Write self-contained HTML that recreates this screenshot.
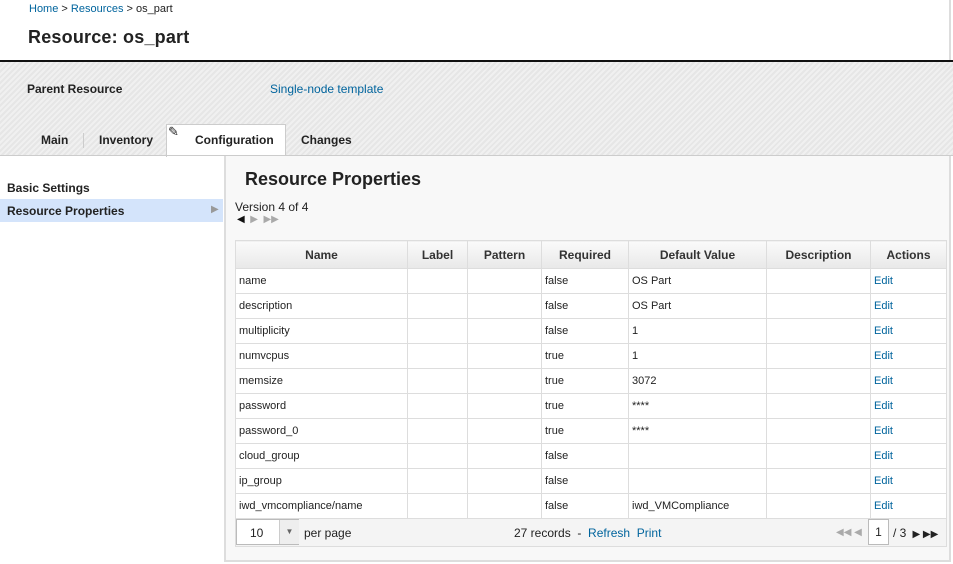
<!DOCTYPE html><html><head><style>
body{margin:0;width:953px;height:564px;overflow:hidden;font-family:"Liberation Sans",sans-serif;font-size:12px;color:#222;background:#fff;position:relative}
a{color:#00649d;text-decoration:none}
.abs{position:absolute}
.band{left:0;top:60px;width:953px;height:96px;border-top:2px solid #111;box-sizing:border-box;background:repeating-linear-gradient(135deg,#f0f0f0 0 2px,#e6e6e6 2px 4px)}
.tab{top:124px;height:32px;line-height:33px;font-weight:bold;font-size:12px}
table{border-collapse:collapse;position:absolute;left:235px;top:240px;width:712px;background:#fff;font-size:11px;table-layout:fixed}
td,th{border:1px solid #ddd;padding:0 3px;height:24px;text-align:left;overflow:hidden;white-space:nowrap}
th{height:27px;text-align:center;font-size:12px;color:#333;background:linear-gradient(#fafafa,#e8e8e8)}
</style></head><body>
<div class="abs" style="left:29px;top:3px;font-size:11px"><a>Home</a> &gt; <a>Resources</a> &gt; os_part</div>
<div class="abs" style="left:28px;top:27px;font-size:18px;font-weight:bold;letter-spacing:0.2px">Resource: os_part</div>
<div class="abs" style="left:949px;top:0;width:2px;height:60px;background:#ddd"></div>
<div class="abs band"></div>
<div class="abs" style="left:27px;top:82px;font-weight:bold">Parent Resource</div>
<div class="abs" style="left:270px;top:82px"><a>Single-node template</a></div>
<div class="abs tab" style="left:41px">Main</div>
<div class="abs" style="left:83px;top:133px;width:1px;height:15px;background:#ccc"></div>
<div class="abs tab" style="left:99px">Inventory</div>
<div class="abs tab" style="left:166px;width:120px;height:33px;background:#fff;border:1px solid #ccc;border-bottom:none;box-sizing:border-box;padding-left:28px;line-height:31px">Configuration</div>
<div class="abs" style="left:168px;top:124px;font-size:13px">✎</div>
<div class="abs tab" style="left:301px">Changes</div>
<div class="abs" style="left:0;top:155px;width:953px;height:1px;background:#ccc"></div>
<div class="abs" style="left:7px;top:181px;font-weight:bold">Basic Settings</div>
<div class="abs" style="left:0;top:199px;width:223px;height:23px;background:#d4e4fb"></div>
<div class="abs" style="left:7px;top:204px;font-weight:bold">Resource Properties</div>
<div class="abs" style="left:211px;top:204px;color:#999;font-size:10px">▶</div>
<div class="abs" style="left:224px;top:156px;width:727px;height:406px;background:#f8f8f8;border:2px solid #ddd;border-top:none;box-sizing:border-box"></div>
<div class="abs" style="left:245px;top:169px;font-size:18px;font-weight:bold">Resource Properties</div>
<div class="abs" style="left:235px;top:200px">Version 4 of 4</div>
<div class="abs" style="left:237px;top:214px;font-size:10px;color:#111">◀ <span style="color:#aaa">&nbsp;▶ &nbsp;▶▶</span></div>
<table>
<colgroup><col style="width:172px"><col style="width:60px"><col style="width:74px"><col style="width:87px"><col style="width:138px"><col style="width:104px"><col></colgroup>
<tr><th>Name</th><th>Label</th><th>Pattern</th><th>Required</th><th>Default Value</th><th>Description</th><th>Actions</th></tr>
<tr><td>name</td><td></td><td></td><td>false</td><td>OS Part</td><td></td><td><a>Edit</a></td></tr>
<tr><td>description</td><td></td><td></td><td>false</td><td>OS Part</td><td></td><td><a>Edit</a></td></tr>
<tr><td>multiplicity</td><td></td><td></td><td>false</td><td>1</td><td></td><td><a>Edit</a></td></tr>
<tr><td>numvcpus</td><td></td><td></td><td>true</td><td>1</td><td></td><td><a>Edit</a></td></tr>
<tr><td>memsize</td><td></td><td></td><td>true</td><td>3072</td><td></td><td><a>Edit</a></td></tr>
<tr><td>password</td><td></td><td></td><td>true</td><td>****</td><td></td><td><a>Edit</a></td></tr>
<tr><td>password_0</td><td></td><td></td><td>true</td><td>****</td><td></td><td><a>Edit</a></td></tr>
<tr><td>cloud_group</td><td></td><td></td><td>false</td><td></td><td></td><td><a>Edit</a></td></tr>
<tr><td>ip_group</td><td></td><td></td><td>false</td><td></td><td></td><td><a>Edit</a></td></tr>
<tr><td>iwd_vmcompliance/name</td><td></td><td></td><td>false</td><td>iwd_VMCompliance</td><td></td><td><a>Edit</a></td></tr>
</table>
<div class="abs" style="left:235px;top:518px;width:712px;height:29px;background:#f4f4f4;border:1px solid #ddd;box-sizing:border-box"></div>
<div class="abs" style="left:236px;top:519px;width:63px;height:26px;background:#fff;border:1px solid #bbb;box-sizing:border-box"></div>
<div class="abs" style="left:250px;top:526px">10</div>
<div class="abs" style="left:279px;top:520px;width:19px;height:24px;background:#eee;border-left:1px solid #ccc;font-size:8px;color:#666;text-align:center;line-height:24px">▼</div>
<div class="abs" style="left:304px;top:526px">per page</div>
<div class="abs" style="left:514px;top:526px">27 records &nbsp;- &nbsp;<a>Refresh</a> &nbsp;<a>Print</a></div>
<div class="abs" style="left:836px;top:527px;font-size:10px;color:#aaa">◀◀ ◀</div>
<div class="abs" style="left:868px;top:519px;width:21px;height:26px;background:#fff;border:1px solid #bbb;box-sizing:border-box;text-align:center;line-height:24px">1</div>
<div class="abs" style="left:893px;top:526px">/ 3 <span style="font-size:10px">&nbsp;▶ ▶▶</span></div>
</body></html>
